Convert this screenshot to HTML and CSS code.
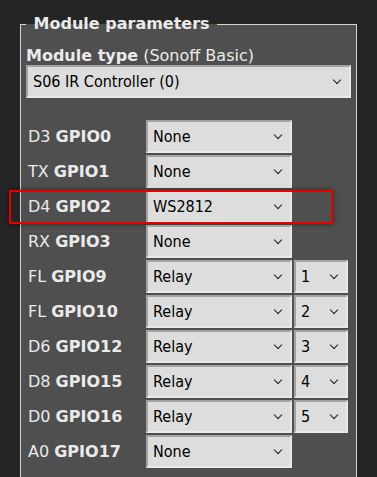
FILE: index.html
```html
<!doctype html>
<html lang="en">
<head>
	<meta charset="UTF-8">
	<title>Configure Module</title>
	<link rel="stylesheet" href="styles.css">
</head>
<body>
<fieldset class="box">
	<legend><b>&nbsp;Module parameters&nbsp;</b></legend>
	<div class="mtype"><b>Module type</b> (Sonoff Basic)</div>
	<span class="sel">
		<select id="g99">
			<option>S06 IR Controller (0)</option>
		</select>
	</span>

	<div class="pins">
		<div class="row">
			<div class="lbl">D3 <b>GPIO0</b></div>
			<span class="sel"><select id="g0"><option>None</option></select></span>
		</div>
		<div class="row">
			<div class="lbl">TX <b>GPIO1</b></div>
			<span class="sel"><select id="g1"><option>None</option></select></span>
		</div>
		<div class="row mark">
			<div class="lbl">D4 <b>GPIO2</b></div>
			<span class="sel"><select id="g2"><option>WS2812</option></select></span>
		</div>
		<div class="row">
			<div class="lbl">RX <b>GPIO3</b></div>
			<span class="sel"><select id="g3"><option>None</option></select></span>
		</div>
		<div class="row">
			<div class="lbl">FL <b>GPIO9</b></div>
			<span class="sel"><select id="g9"><option>Relay</option></select></span>
			<span class="sel"><select id="h9"><option>1</option></select></span>
		</div>
		<div class="row">
			<div class="lbl">FL <b>GPIO10</b></div>
			<span class="sel"><select id="g10"><option>Relay</option></select></span>
			<span class="sel"><select id="h10"><option>2</option></select></span>
		</div>
		<div class="row">
			<div class="lbl">D6 <b>GPIO12</b></div>
			<span class="sel"><select id="g12"><option>Relay</option></select></span>
			<span class="sel"><select id="h12"><option>3</option></select></span>
		</div>
		<div class="row">
			<div class="lbl">D8 <b>GPIO15</b></div>
			<span class="sel"><select id="g15"><option>Relay</option></select></span>
			<span class="sel"><select id="h15"><option>4</option></select></span>
		</div>
		<div class="row">
			<div class="lbl">D0 <b>GPIO16</b></div>
			<span class="sel"><select id="g16"><option>Relay</option></select></span>
			<span class="sel"><select id="h16"><option>5</option></select></span>
		</div>
		<div class="row">
			<div class="lbl">A0 <b>GPIO17</b></div>
			<span class="sel"><select id="g17"><option>None</option></select></span>
		</div>
	</div>
</fieldset>
</body>
</html>
```

FILE: styles.css
```css
html, body{
	margin: 0;
	height: 100%;
	overflow: hidden;
}
body{
	background: #252525;
	color: #eaeaea;
	font-family: "DejaVu Sans", Verdana, sans-serif;
	font-size: 16px;
}
.box{
	width: 325px;
	margin: 15px 0 0 20px;
	padding: 14px 5px 40px 5px;
	border: 1px solid #d6d6d6;
	background: #4f4f4f;
}
legend{
	padding: 0 2px;
	line-height: 18px;
}
.mtype{
	line-height: 18px;
}
.sel{
	display: block;
	position: relative;
}
.sel::after{
	content: "";
	position: absolute;
	right: 11px;
	top: 12px;
	width: 5px;
	height: 5px;
	border-right: 1.6px solid #1e1e1e;
	border-bottom: 1.6px solid #1e1e1e;
	transform: rotate(45deg);
	pointer-events: none;
}
select{
	display: block;
	width: 100%;
	height: 33px;
	box-sizing: border-box;
	margin: 0;
	padding: 0 0 0 5px;
	appearance: none;
	-webkit-appearance: none;
	border-radius: 0;
	border: 2px solid;
	border-color: #a3a3a3 #e9e9e9 #e9e9e9 #a3a3a3;
	background: #dddddd;
	color: #000;
	font-family: "DejaVu Sans Condensed", "Liberation Sans", sans-serif;
	font-size: 16px;
}
.pins{
	display: flex;
	flex-direction: column;
	gap: 2px;
	margin: 22px 0 0 2px;
}
.row{
	display: grid;
	grid-template-columns: 116px 146px 54px;
	column-gap: 2px;
	align-items: center;
	position: relative;
}
.lbl{
	white-space: nowrap;
}
.mark::after{
	content: "";
	position: absolute;
	left: -19px;
	top: 0;
	width: 324px;
	height: 34px;
	box-sizing: border-box;
	border: 2px solid #e60000;
	box-shadow: 0 0 4px 1px rgba(0, 0, 0, 0.35);
	pointer-events: none;
}
```
